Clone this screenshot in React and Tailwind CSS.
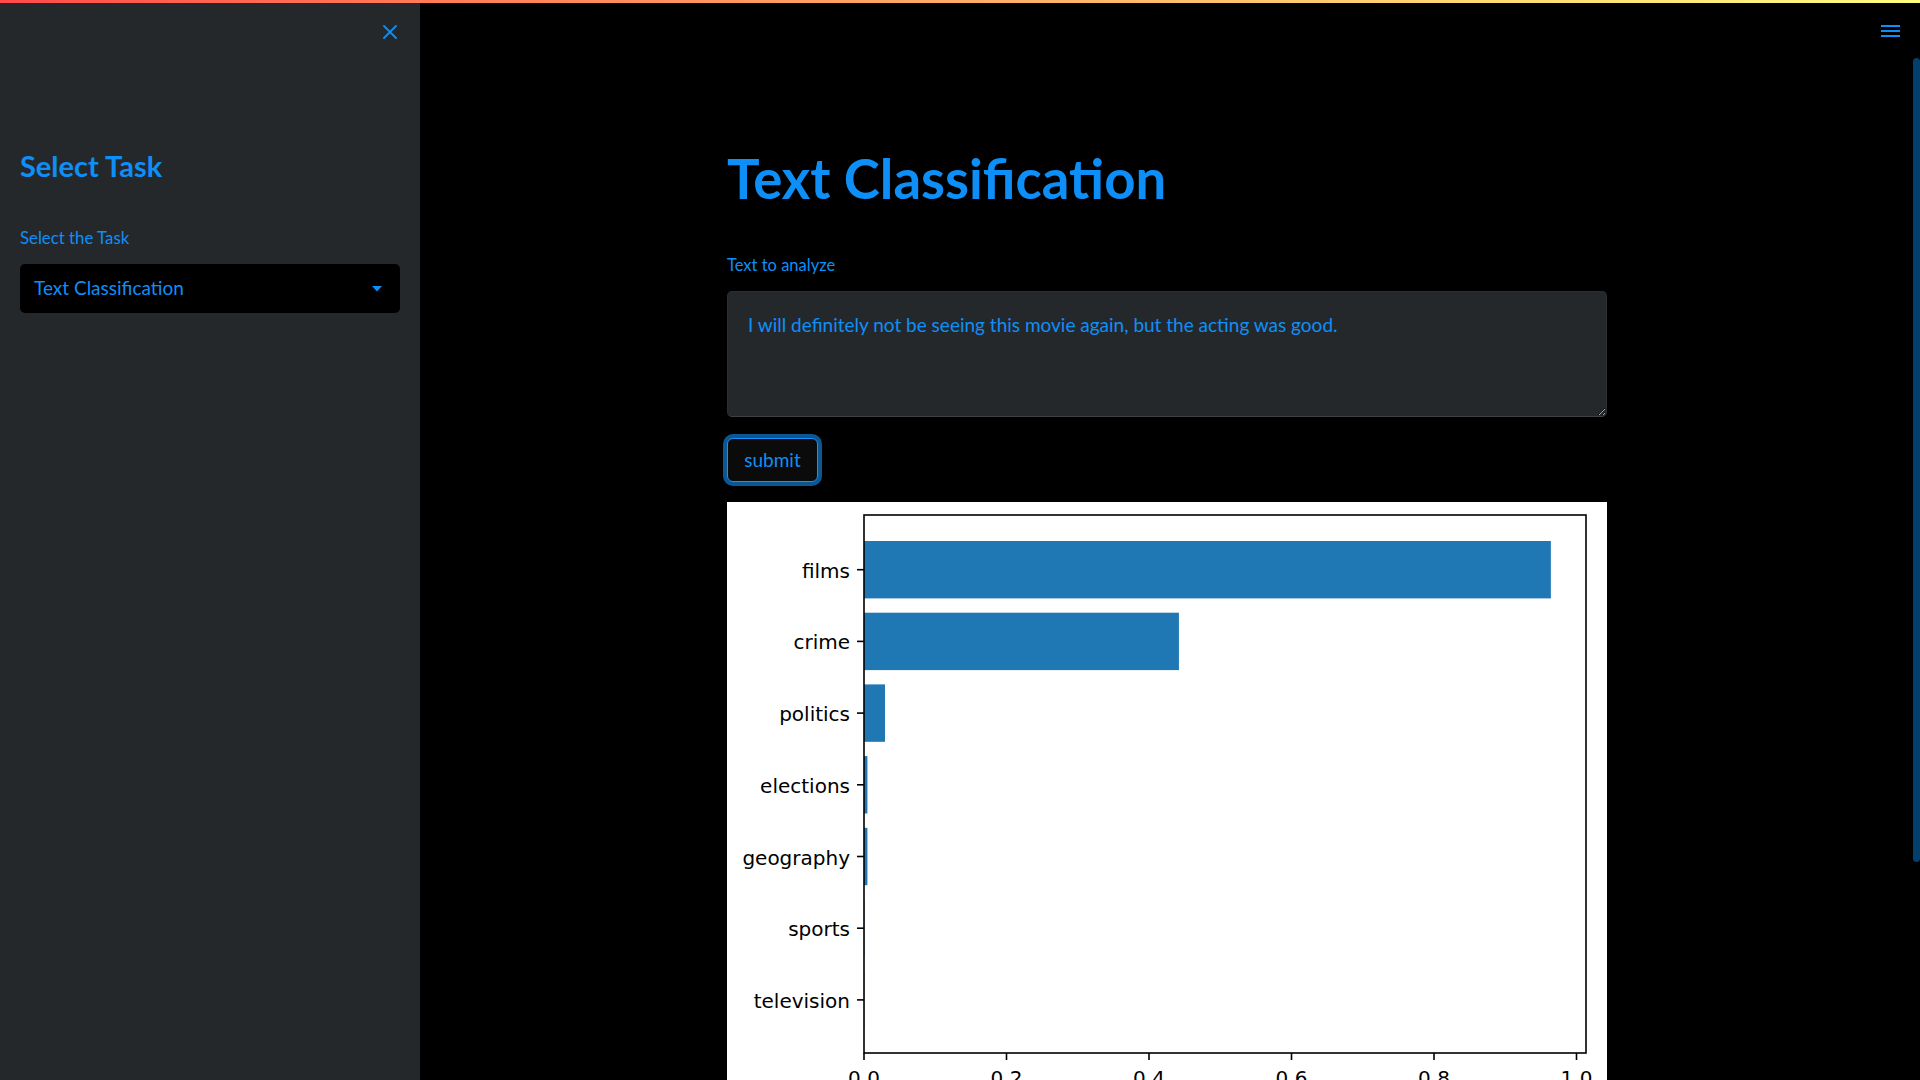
import React from "react";

const BLUE = "#0e8ff7";

const bars = [
  ["films", 0.964],
  ["crime", 0.442],
  ["politics", 0.0295],
  ["elections", 0.0048],
  ["geography", 0.0048],
  ["sports", 0.0004],
  ["television", 0.0003],
];

function Chart() {
  const x0 = 137;
  const scale = 712.5;
  const step = 71.7;
  const top0 = 39;
  const bh = 57.4;
  const ticks = [0, 0.2, 0.4, 0.6, 0.8, 1.0];
  return (
    <svg width="880" height="600" viewBox="0 0 880 600" className="block">
      <rect x="0" y="0" width="880" height="600" fill="#ffffff" />
      {bars.map(([name, v], i) => {
        const y = top0 + i * step;
        const c = y + bh / 2;
        return (
          <g key={name}>
            <rect x={x0} y={y} width={Math.max(v * scale, 0)} height={bh} fill="#1f77b4" />
            <line x1={x0 - 7} x2={x0} y1={c} y2={c} stroke="#000" strokeWidth="1.6" />
            <text
              x={123}
              y={c + 8}
              textAnchor="end"
              fontFamily="'DejaVu Sans', sans-serif"
              fontSize="20"
              fill="#000"
            >
              {name}
            </text>
          </g>
        );
      })}
      <rect x={x0} y="13" width="722" height="538" fill="none" stroke="#000" strokeWidth="1.6" />
      {ticks.map((t) => {
        const x = x0 + t * scale;
        return (
          <g key={t}>
            <line x1={x} x2={x} y1={551} y2={558} stroke="#000" strokeWidth="1.6" />
            <text
              x={x}
              y={583}
              textAnchor="middle"
              fontFamily="'DejaVu Sans', sans-serif"
              fontSize="20"
              fill="#000"
            >
              {t.toFixed(1)}
            </text>
          </g>
        );
      })}
    </svg>
  );
}

export default function App() {
  return (
    <div
      className="relative flex h-screen w-full overflow-hidden bg-black"
      style={{ fontFamily: "Lato, 'Open Sans', sans-serif" }}
    >
      {/* top decoration */}
      <div className="absolute left-0 right-0 top-0 z-10 h-[3px] bg-gradient-to-r from-[#ff4b4b] to-[#fffd80]" />

      {/* sidebar */}
      <aside className="flex h-full w-[420px] shrink-0 flex-col bg-[#25282b] px-[20px]">
        <div className="flex justify-end pt-[25px] pr-[3px]">
          <svg width="14" height="14" viewBox="0 0 14 14">
            <path d="M1 1 L13 13 M13 1 L1 13" stroke={BLUE} strokeWidth="1.8" strokeLinecap="round" />
          </svg>
        </div>
        <h2 className="mt-[109px] text-[29px] font-bold leading-[36px] text-[#0e8ff7]">Select Task</h2>
        <label className="mt-[42px] text-[16.8px] leading-[24px] text-[#0e8ff7]">Select the Task</label>
        <div className="mt-[14px] flex h-[49px] items-center justify-between rounded-[5px] bg-black pl-[14px] pr-[18px]">
          <span className="text-[19px] text-[#0e8ff7]">Text Classification</span>
          <svg width="10" height="6" viewBox="0 0 10 6">
            <path d="M0 0 L10 0 L5 5.5 Z" fill={BLUE} />
          </svg>
        </div>
      </aside>

      {/* main */}
      <main className="relative h-full flex-1">
        <div className="ml-[307px] flex w-[880px] flex-col">
          <h1 className="pt-[146px] text-[54.5px] font-bold leading-[64px] text-[#0e8ff7]">Text Classification</h1>
          <label className="mt-[43px] text-[16.5px] leading-[24px] text-[#0e8ff7]">Text to analyze</label>
          <textarea
            className="mt-[14px] h-[126px] w-[880px] resize-y rounded-[5px] border border-[#2b2e32] border-b-[#3d4045] bg-[#25282b] pl-[20px] pt-[18px] text-[19px] leading-[30px] text-[#0e8ff7] outline-none"
            defaultValue="I will definitely not be seeing this movie again, but the acting was good."
          />
          <div className="mt-[21px]">
            <button className="h-[44px] w-[91px] rounded-[6px] border border-[#1a8fff] bg-[#0b0b0b] text-[19px] text-[#0e8ff7] ring-[4px] ring-[#0a5893]">
              submit
            </button>
          </div>
          <div className="mt-[20px]">
            <Chart />
          </div>
        </div>

        {/* hamburger */}
        <div className="absolute right-[20px] top-[25px]">
          <svg width="19" height="12" viewBox="0 0 19 12">
            <rect x="0" y="0" width="19" height="2" fill={BLUE} />
            <rect x="0" y="5" width="19" height="2" fill={BLUE} />
            <rect x="0" y="10" width="19" height="2" fill={BLUE} />
          </svg>
        </div>

        {/* scrollbar */}
        <div className="absolute right-0 top-[58px] h-[804px] w-[7px] rounded-[4px] bg-[#023f6c]" />
      </main>
    </div>
  );
}
